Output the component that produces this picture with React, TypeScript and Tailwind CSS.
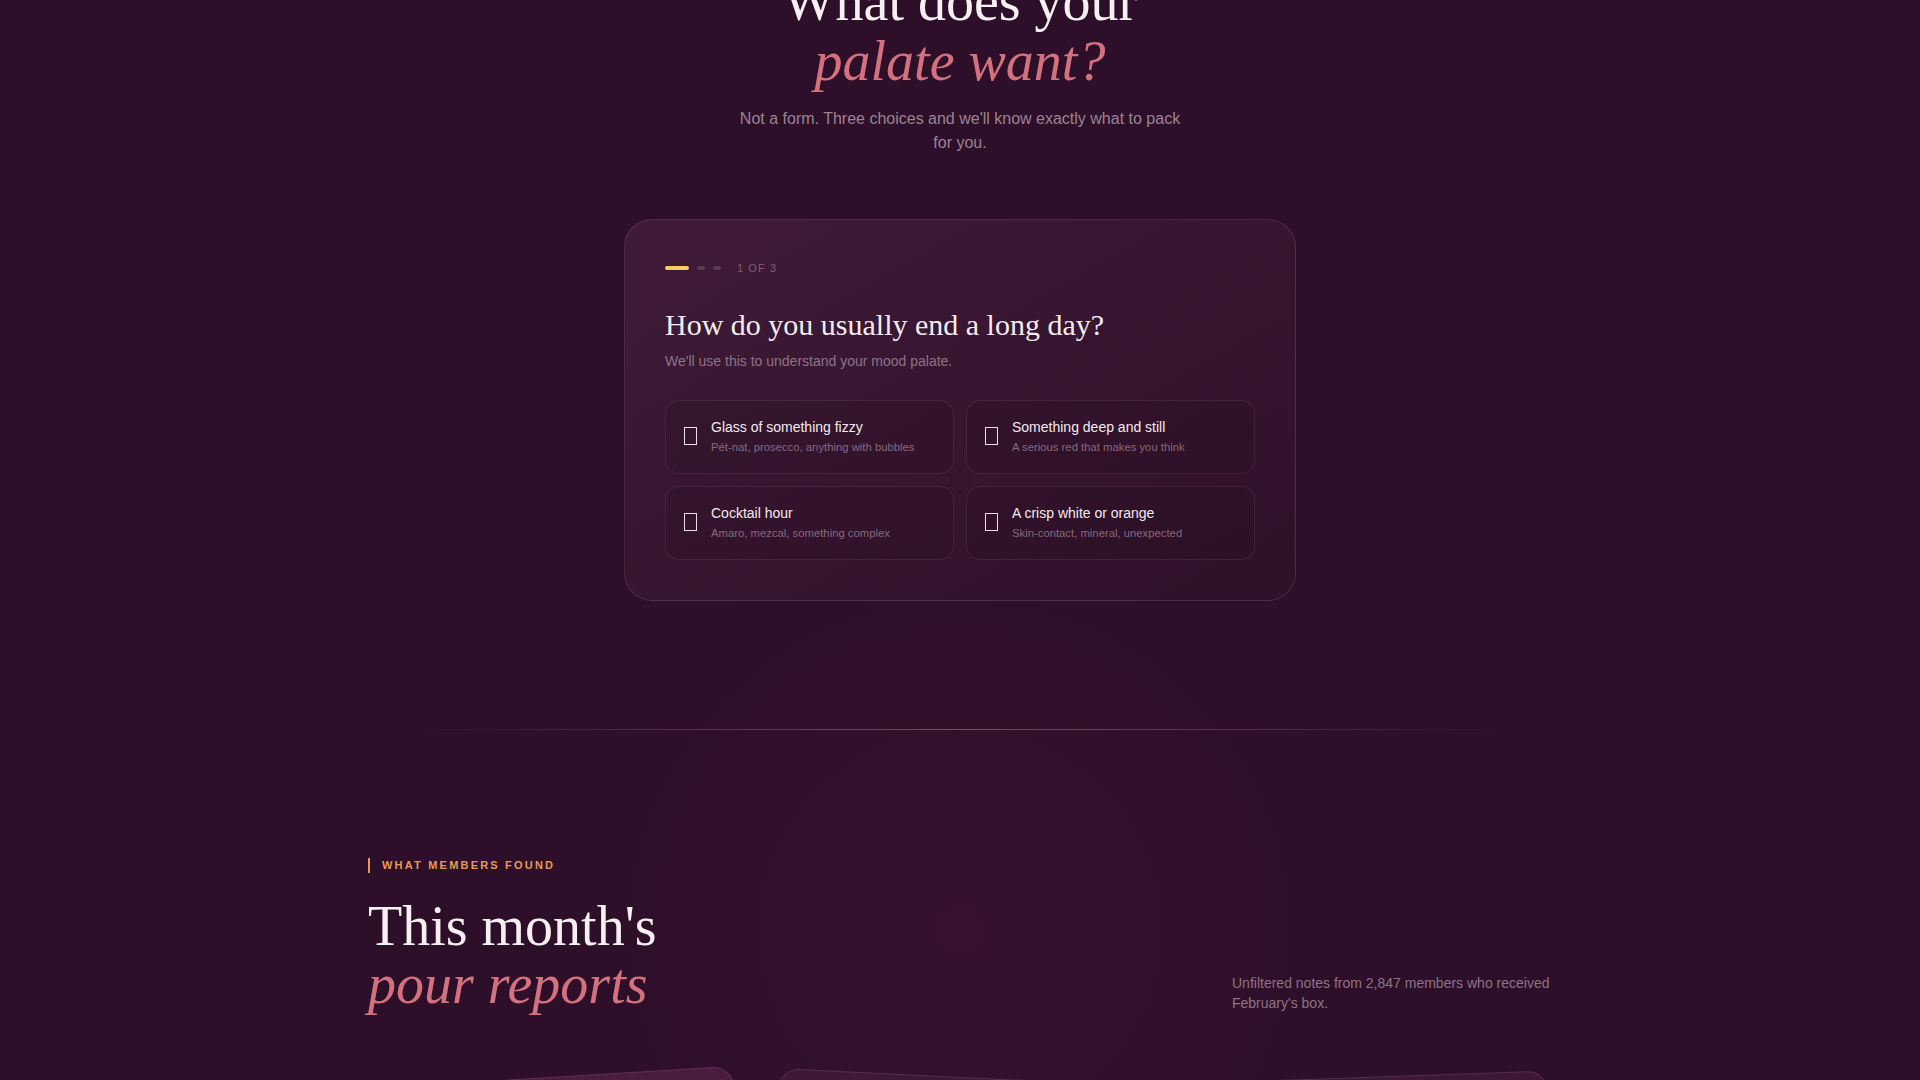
import React from "react";

const options = [
  { title: "Glass of something fizzy", note: "Pét-nat, prosecco, anything with bubbles" },
  { title: "Something deep and still", note: "A serious red that makes you think" },
  { title: "Cocktail hour", note: "Amaro, mezcal, something complex" },
  { title: "A crisp white or orange", note: "Skin-contact, mineral, unexpected" },
];

function OptionCard({ title, note }: { title: string; note: string }) {
  return (
    <button className="flex items-center gap-3.5 rounded-[14px] border border-white/[0.08] bg-black/[0.07] px-[18px] pb-[18px] pt-4 text-left">
      {/* emoji slot renders as an empty glyph box */}
      <span className="inline-block h-[18px] w-[13px] shrink-0 border border-[#eadde5]" />
      <span className="flex flex-col">
        <span className="text-sm leading-5 text-[#f3e9ee]">{title}</span>
        <span className="mt-0.5 text-[11.3px] leading-4 text-[#86697e]">{note}</span>
      </span>
    </button>
  );
}

export default function App() {
  return (
    <div className="min-h-screen overflow-hidden bg-[#2e0f29] font-['Liberation_Sans',Arial,sans-serif]">
      {/* Quiz */}
      <section className="px-6 pb-32">
        <div className="-mt-[29px] text-center">
          <h2 className="font-['Liberation_Serif','Times_New_Roman',serif] text-[56px] leading-[1.08] text-[#f7eff2]">
            What does your
            <br />
            <em className="text-[#d4717f]">palate want?</em>
          </h2>
          <p className="mx-auto mt-[15px] max-w-[448px] text-base leading-6 text-[#9a8493]">
            Not a form. Three choices and we'll know exactly what to pack for you.
          </p>
        </div>

        <div className="mx-auto mt-16 max-w-2xl rounded-[28px] border border-white/10 bg-gradient-to-br from-[#3f1b37] to-[#2f1029] p-10">
          <div className="flex items-center gap-2">
            <span className="h-1 w-6 rounded-full bg-[#f5cd63]" />
            <span className="h-1 w-2 rounded-full bg-white/15" />
            <span className="h-1 w-2 rounded-full bg-white/15" />
            <span className="ml-2 text-[11px] leading-4 tracking-[0.1em] text-[#7c6072]">1 OF 3</span>
          </div>

          <h3 className="mt-[31px] font-['Liberation_Serif','Times_New_Roman',serif] text-[30px] leading-[1.2] text-[#f4ebef]">
            How do you usually end a long day?
          </h3>
          <p className="mt-2 text-sm leading-5 text-[#8e7386]">We'll use this to understand your mood palate.</p>

          <div className="mt-[29px] grid grid-cols-2 gap-3">
            {options.map((o) => (
              <OptionCard key={o.title} title={o.title} note={o.note} />
            ))}
          </div>
        </div>
      </section>

      {/* Divider */}
      <div className="mx-auto max-w-6xl px-8">
        <div className="h-px bg-gradient-to-r from-transparent via-[#a36b7c]/70 to-transparent" />
      </div>

      {/* Reports */}
      <section className="relative">
        <div className="pointer-events-none absolute left-1/2 top-[-140px] h-[680px] w-[680px] -translate-x-1/2 rounded-full bg-[radial-gradient(circle,rgba(80,28,66,0.22)_0%,rgba(80,28,66,0.1)_45%,transparent_70%)]" />
        <div className="relative mx-auto max-w-7xl px-12 pt-32">
          <div className="flex items-end justify-between">
            <div>
              <div className="border-l-2 border-[#e59b56] pl-3 text-[11px] font-bold leading-[15px] tracking-[0.2em] text-[#e59b56]">
                WHAT MEMBERS FOUND
              </div>
              <h2 className="mt-[25px] font-['Liberation_Serif','Times_New_Roman',serif] text-[56px] leading-[1.03] text-[#f7eff2]">
                This month's
                <br />
                <em className="text-[#d4717f]">pour reports</em>
              </h2>
            </div>
            <p className="max-w-xs text-sm leading-5 text-[#8e7386]">
              Unfiltered notes from 2,847 members who received February's box.
            </p>
          </div>

          <div className="mt-16 grid grid-cols-3 gap-8 pb-24">
            <div className="h-[260px] rotate-[-3.5deg] rounded-[20px] border border-white/10 bg-[#4a1c3d]" />
            <div className="h-[260px] rotate-[2.8deg] rounded-[20px] border border-white/10 bg-[#3e1937]" />
            <div className="h-[260px] rotate-[-2deg] rounded-[20px] border border-white/10 bg-[#3c1835]" />
          </div>
        </div>
      </section>
    </div>
  );
}
